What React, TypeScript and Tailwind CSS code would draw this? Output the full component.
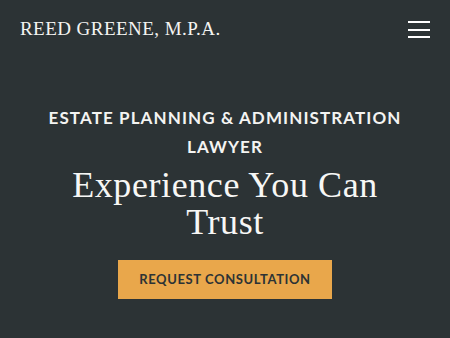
import React from 'react';

const App = () => {
    return (
        <div className="w-[450px] h-[338px] bg-[#2c3335] text-white overflow-hidden">
            {/* Top bar */}
            <header className="flex items-center justify-between pl-5 pr-5 pt-[17px]">
                <a href="#" className="text-[19px] leading-[24px] tracking-[0.45px] text-[#f4f4f2] font-['Liberation_Serif',serif]">
                    REED GREENE, M.P.A.
                </a>
                <button aria-label="Menu" className="flex flex-col gap-[5.5px] w-[22px] mt-[1px]">
                    <span className="block h-[2px] w-full bg-white" />
                    <span className="block h-[2px] w-full bg-white" />
                    <span className="block h-[2px] w-full bg-white" />
                </button>
            </header>

            {/* Hero */}
            <section className="flex flex-col items-center text-center pt-[62px] px-4">
                <h2 className="text-[17px] leading-[29px] font-bold tracking-[1.1px] text-[#f4f4f2] font-['Lato',sans-serif]">
                    ESTATE PLANNING &amp; ADMINISTRATION<br />LAWYER
                </h2>
                <h1 className="mt-[6px] text-[36px] leading-[37px] tracking-[0.6px] text-[#f7f7f5] font-['Liberation_Serif',serif]">
                    Experience You Can<br />Trust
                </h1>
                <a href="#" className="mt-[19px] w-[214px] h-[39px] flex items-center justify-center bg-[#e9a74b] text-[#2c3335] text-[13px] font-bold tracking-[0.6px] font-['Lato',sans-serif]">
                    REQUEST CONSULTATION
                </a>
            </section>
        </div>
    );
};

export default App;
